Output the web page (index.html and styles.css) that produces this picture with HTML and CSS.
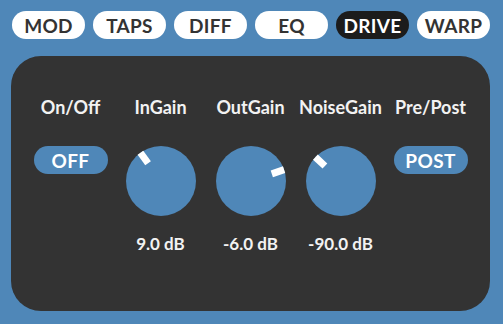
FILE: index.html
```html
<!DOCTYPE html>
<html lang="en">
<head>
  <meta charset="UTF-8">
  <title>Drive</title>
  <link rel="stylesheet" href="styles.css">
</head>
<body>
  <div class="tabs">
    <button class="tab">MOD</button>
    <button class="tab">TAPS</button>
    <button class="tab">DIFF</button>
    <button class="tab">EQ</button>
    <button class="tab active">DRIVE</button>
    <button class="tab">WARP</button>
  </div>

  <div class="panel">
    <div class="control">
      <div class="label">On/Off</div>
      <div class="slot"><button class="toggle">OFF</button></div>
      <div class="value"></div>
    </div>
    <div class="control">
      <div class="label">InGain</div>
      <div class="slot">
        <svg class="knob" width="70" height="70" viewBox="-35 -35 70 70">
          <circle r="35" fill="#4f87b8"/>
          <rect x="-3.5" y="-35" width="7" height="13" fill="#fff" transform="rotate(-36)"/>
        </svg>
      </div>
      <div class="value">9.0 dB</div>
    </div>
    <div class="control">
      <div class="label">OutGain</div>
      <div class="slot">
        <svg class="knob" width="70" height="70" viewBox="-35 -35 70 70">
          <circle r="35" fill="#4f87b8"/>
          <rect x="-3.5" y="-35" width="7" height="13" fill="#fff" transform="rotate(71)"/>
        </svg>
      </div>
      <div class="value">-6.0 dB</div>
    </div>
    <div class="control">
      <div class="label">NoiseGain</div>
      <div class="slot">
        <svg class="knob" width="70" height="70" viewBox="-35 -35 70 70">
          <circle r="35" fill="#4f87b8"/>
          <rect x="-3.5" y="-35" width="7" height="13" fill="#fff" transform="rotate(-47)"/>
        </svg>
      </div>
      <div class="value">-90.0 dB</div>
    </div>
    <div class="control">
      <div class="label">Pre/Post</div>
      <div class="slot"><button class="toggle">POST</button></div>
      <div class="value"></div>
    </div>
  </div>
</body>
</html>
```

FILE: styles.css
```css
body {
  margin: 0;
  background: #4f87b8;
  font-family: Lato, "Open Sans", sans-serif;
  width: 503px;
  height: 324px;
  overflow: hidden;
}
.tabs {
  display: flex;
  gap: 8px;
  padding: 11px 0 0 12px;
}
.tab {
  width: 73px;
  height: 28px;
  border: none;
  border-radius: 14px;
  background: #fff;
  color: #333;
  font-family: inherit;
  font-weight: bold;
  font-size: 19px;
  letter-spacing: 0.3px;
  padding: 0;
}
.tab.active {
  background: #1c1c1c;
  color: #fff;
}
.panel {
  margin: 17px 0 0 11px;
  width: 479px;
  height: 255px;
  box-sizing: border-box;
  background: #333;
  border-radius: 30px;
  display: flex;
  justify-content: center;
  padding-top: 39px;
}
.control {
  width: 90px;
  display: flex;
  flex-direction: column;
  align-items: center;
  color: #f2f2f2;
}
.label {
  font-size: 18px;
  font-weight: bold;
  line-height: 24px;
}
.slot {
  height: 70px;
  margin-top: 27px;
}
.toggle {
  width: 74px;
  height: 28px;
  border: none;
  border-radius: 14px;
  background: #4f87b8;
  color: #fff;
  font-family: inherit;
  font-weight: bold;
  font-size: 19px;
  letter-spacing: 0.4px;
  padding: 0;
}
.knob {
  display: block;
}
.value {
  margin-top: 18px;
  font-size: 17px;
  font-weight: bold;
  line-height: 20px;
}
```
